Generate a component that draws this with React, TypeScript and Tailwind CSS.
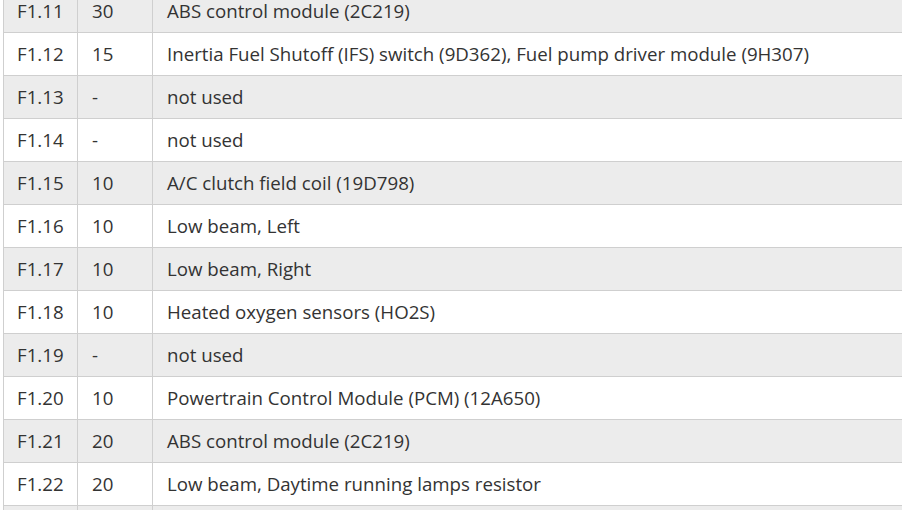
import React from 'react';

const ROWS: [string, string, string][] = [
  ['F1.11', '30', 'ABS control module (2C219)'],
  ['F1.12', '15', 'Inertia Fuel Shutoff (IFS) switch (9D362), Fuel pump driver module (9H307)'],
  ['F1.13', '-', 'not used'],
  ['F1.14', '-', 'not used'],
  ['F1.15', '10', 'A/C clutch field coil (19D798)'],
  ['F1.16', '10', 'Low beam, Left'],
  ['F1.17', '10', 'Low beam, Right'],
  ['F1.18', '10', 'Heated oxygen sensors (HO2S)'],
  ['F1.19', '-', 'not used'],
  ['F1.20', '10', 'Powertrain Control Module (PCM) (12A650)'],
  ['F1.21', '20', 'ABS control module (2C219)'],
  ['F1.22', '20', 'Low beam, Daytime running lamps resistor'],
  ['', '', ''],
];

export default function App() {
  return (
    <div className="w-[902px] h-[510px] overflow-hidden bg-white">
      <div className="-mt-[11px] ml-[3px] w-[920px]">
        <table className="w-full border-collapse table-fixed text-[18.7px] leading-[26px] text-[#333] font-['Open_Sans',sans-serif]">
          <tbody>
            {ROWS.map((r, i) => (
              <tr key={i} className={i % 2 === 0 ? 'bg-[#ececec]' : 'bg-white'}>
                <td className="w-[74px] h-[43px] px-[13px] py-0 border border-[#cfcfcf] align-middle whitespace-nowrap">{r[0]}</td>
                <td className="w-[75px] h-[43px] px-[14px] py-0 border border-[#cfcfcf] align-middle">{r[1]}</td>
                <td className="h-[43px] px-[14px] py-0 border border-[#cfcfcf] align-middle whitespace-nowrap">{r[2]}</td>
              </tr>
            ))}
          </tbody>
        </table>
      </div>
    </div>
  );
}
